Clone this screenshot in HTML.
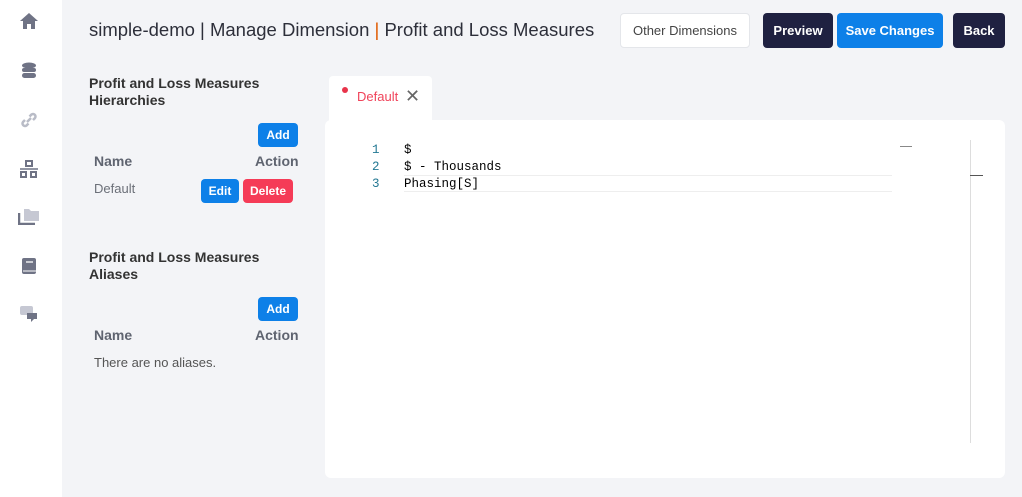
<!DOCTYPE html><html><head><style>
body{margin:0;width:1022px;height:497px;background:#f3f4f7;font-family:"Liberation Sans",sans-serif;position:relative;overflow:hidden}
.a{position:absolute}
.sb{left:0;top:0;width:62px;height:497px;background:#fff}
.btn{position:absolute;border-radius:4px;font-weight:bold;font-size:13px;color:#fff;display:flex;align-items:center;justify-content:center}
h3{position:absolute;margin:0;font-size:14px;font-weight:bold;color:#333;line-height:17px}
.th{position:absolute;font-size:14px;font-weight:bold;color:#5f6470}
.mono{font-family:"Liberation Mono",monospace;font-size:12.5px;position:absolute}
</style></head><body>
<div class="a sb"></div>
<svg class="a" style="left:19px;top:12px" width="20" height="18" viewBox="0 0 20 18"><path d="M10 1L1 9h3v8h4v-5h4v5h4V9h3z" fill="#6f7385"/></svg>
<svg class="a" style="left:21px;top:62px" width="16" height="18"><ellipse cx="8" cy="3.5" rx="7" ry="3" fill="#6f7385"/><rect x="1" y="6" width="14" height="4" rx="2" fill="#6f7385"/><rect x="1" y="11" width="14" height="5" rx="2.5" fill="#6f7385"/></svg>
<svg class="a" style="left:20px;top:111px" width="18" height="18"><path d="M7 11l4-4M5 9l-2 2a2.5 2.5 0 003.5 3.5l2-2M13 9l2-2a2.5 2.5 0 00-3.5-3.5l-2 2" stroke="#b9bcc7" stroke-width="2.5" fill="none"/></svg>
<svg class="a" style="left:19px;top:160px" width="20" height="18"><rect x="7" y="1" width="6" height="5" fill="none" stroke="#6f7385" stroke-width="2"/><path d="M1 9h18" stroke="#6f7385" stroke-width="1.5"/><rect x="2" y="12" width="5" height="5" fill="none" stroke="#6f7385" stroke-width="2"/><rect x="12" y="12" width="5" height="5" fill="none" stroke="#6f7385" stroke-width="2"/></svg>
<svg class="a" style="left:18px;top:207px" width="22" height="18"><path d="M6 2h5l2 2h8v10H6z" fill="#c6c8d3"/><path d="M1 6v11h16" stroke="#6f7385" stroke-width="2.5" fill="none"/></svg>
<svg class="a" style="left:21px;top:257px" width="16" height="18"><rect x="1" y="1" width="14" height="16" rx="2" fill="#6f7385"/><path d="M5 5h7" stroke="#fff" stroke-width="1.3"/><path d="M2 14h13" stroke="#fff" stroke-width="1"/></svg>
<svg class="a" style="left:19px;top:305px" width="20" height="18"><rect x="1" y="1" width="13" height="9" rx="2" fill="#c6c8d3"/><path d="M8 8h10v6h-3l-3 3v-3H8z" fill="#6f7385"/></svg>

<div class="a" style="left:89px;top:19px;font-size:18.5px;color:#2d2f3a">simple-demo | Manage Dimension <span style="color:#e05a00">|</span> Profit and Loss Measures</div>
<div class="btn" style="left:620px;top:13px;width:128px;height:33px;background:#fff;border:1px solid #e4e6ea;color:#444;font-weight:normal">Other Dimensions</div>
<div class="btn" style="left:763px;top:13px;width:70px;height:35px;background:#1f2141">Preview</div>
<div class="btn" style="left:837px;top:13px;width:106px;height:35px;background:#0d80e8">Save Changes</div>
<div class="btn" style="left:953px;top:13px;width:52px;height:35px;background:#1f2141">Back</div>

<h3 style="left:89px;top:75px">Profit and Loss Measures<br>Hierarchies</h3>
<div class="btn" style="left:258px;top:123px;width:40px;height:24px;background:#0d80e8;font-size:12px">Add</div>
<div class="th" style="left:94px;top:153px">Name</div><div class="th" style="left:255px;top:153px">Action</div>
<div class="a" style="left:94px;top:181px;font-size:13px;color:#6b6f78">Default</div>
<div class="btn" style="left:201px;top:179px;width:38px;height:24px;background:#0d80e8;font-size:12px">Edit</div>
<div class="btn" style="left:243px;top:179px;width:50px;height:24px;background:#f53b57;font-size:12px">Delete</div>

<h3 style="left:89px;top:249px">Profit and Loss Measures<br>Aliases</h3>
<div class="btn" style="left:258px;top:297px;width:40px;height:24px;background:#0d80e8;font-size:12px">Add</div>
<div class="th" style="left:94px;top:327px">Name</div><div class="th" style="left:255px;top:327px">Action</div>
<div class="a" style="left:94px;top:355px;font-size:13px;color:#555">There are no aliases.</div>

<div class="a" style="left:329px;top:76px;width:103px;height:50px;background:#fff;border-radius:4px 4px 0 0"></div>
<div class="a" style="left:342px;top:87px;width:6px;height:6px;border-radius:50%;background:#e8334a"></div>
<div class="a" style="left:357px;top:89px;font-size:13px;color:#f0435a">Default</div>
<div class="a" style="left:405px;top:86px;font-size:18px;color:#666">✕</div>
<div class="a" style="left:325px;top:120px;width:680px;height:358px;background:#fff;border-radius:6px"></div>
<div class="mono" style="left:372px;top:142px;color:#237893;line-height:17px">1<br>2<br>3</div>
<div class="mono" style="left:404px;top:142px;color:#000;line-height:17px">$<br>$ - Thousands<br>Phasing[S]</div>
<div class="a" style="left:404px;top:175px;width:488px;height:15px;border-top:1px solid #eee;border-bottom:1px solid #eee"></div>
<div class="a" style="left:900px;top:143px;width:12px;height:3px;border-bottom:1px solid #888"></div>
<div class="a" style="left:970px;top:140px;width:1px;height:303px;background:#ddd"></div>
<div class="a" style="left:970px;top:175px;width:13px;height:1px;background:#555"></div>
</body></html>
